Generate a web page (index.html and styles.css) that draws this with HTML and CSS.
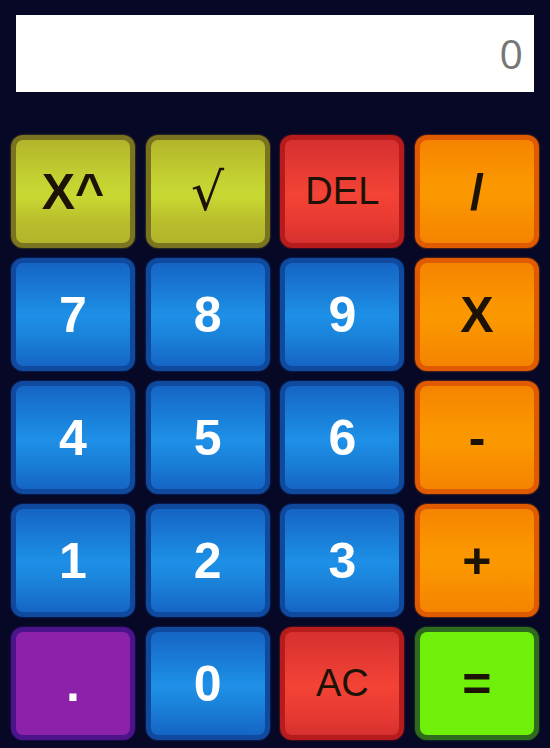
FILE: index.html
```html
<!DOCTYPE html>
<html>
<head>
<meta charset="utf-8">
<link rel="stylesheet" href="styles.css">
</head>
<body>
<div class="calc">
  <div class="display">0</div>
  <div class="keys">
    <button class="key yellow bold">X^</button>
    <button class="key yellow root">√</button>
    <button class="key red">DEL</button>
    <button class="key orange bold">/</button>
    <button class="key blue bold">7</button>
    <button class="key blue bold">8</button>
    <button class="key blue bold">9</button>
    <button class="key orange bold">X</button>
    <button class="key blue bold">4</button>
    <button class="key blue bold">5</button>
    <button class="key blue bold">6</button>
    <button class="key orange bold">-</button>
    <button class="key blue bold">1</button>
    <button class="key blue bold">2</button>
    <button class="key blue bold">3</button>
    <button class="key orange bold">+</button>
    <button class="key purple bold">.</button>
    <button class="key blue bold">0</button>
    <button class="key red">AC</button>
    <button class="key green bold">=</button>
  </div>
</div>
</body>
</html>
```
FILE: styles.css
```css
html, body {
  margin: 0;
  padding: 0;
  background: #060826;
  height: 100%;
}
.calc {
  padding: 15px 11px 0 11px;
}
.display {
  margin: 0 5px;
  height: 77px;
  background: #ffffff;
  color: #767676;
  font-family: "Open Sans", sans-serif;
  font-size: 41px;
  line-height: 77px;
  text-align: right;
  padding-right: 11px;
  box-sizing: border-box;
}
.keys {
  margin-top: 43px;
  display: grid;
  grid-template-columns: repeat(4, 124px);
  grid-auto-rows: 113px;
  column-gap: 10.66px;
  row-gap: 10px;
}
.key {
  margin: 0;
  padding: 0;
  border: 5px solid;
  border-radius: 12px;
  font-family: "Liberation Sans", Arial, sans-serif;
  font-size: 38px;
  color: #1c1206;
  display: flex;
  align-items: center;
  justify-content: center;
}
.bold {
  font-weight: bold;
  font-size: 50px;
}
.root {
  font-family: "DejaVu Serif", serif;
  font-size: 52px;
}
.blue {
  border-color: #0f4a9e;
  box-shadow: 0 0 2px 0 #0f4a9e;
  background: linear-gradient(#1565c4, #1c8be2 45%, #1e90e8 52%, #1a7fd6 75%, #1565c4);
  color: #ffffff;
}
.yellow {
  border-color: #7a7320;
  box-shadow: 0 0 2px 0 #7a7320;
  background: linear-gradient(#b3b42a, #c4d332 40%, #c8d832 55%, #b8bd2c 80%, #b3b42a);
}
.red {
  border-color: #b71c1c;
  box-shadow: 0 0 2px 0 #b71c1c;
  background: linear-gradient(#d63030, #ef4035 45%, #f44336 52%, #e83a32 80%, #d63030);
}
.orange {
  border-color: #e05a00;
  box-shadow: 0 0 2px 0 #e05a00;
  background: linear-gradient(#f58400, #fb9600 40%, #fb9800 55%, #f78c00 80%, #f58400);
}
.green {
  border-color: #2f6b1c;
  box-shadow: 0 0 2px 0 #2f6b1c;
  background: #6ef00a;
}
.purple {
  border-color: #4b148a;
  box-shadow: 0 0 2px 0 #4b148a;
  background: #8c22a8;
  color: #ffffff;
}
```
